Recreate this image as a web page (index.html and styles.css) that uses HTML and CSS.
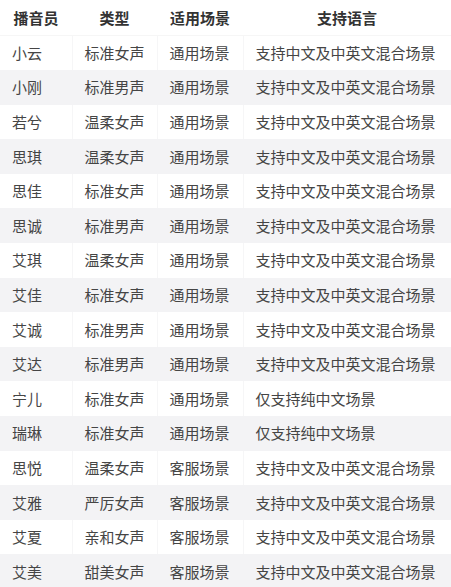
FILE: index.html
```html
<!DOCTYPE html>
<html lang="zh">
<head>
<meta charset="utf-8">
<link rel="stylesheet" href="styles.css">
</head>
<body>
<table class="voices">
<colgroup><col class="c1"><col class="c2"><col class="c3"><col class="c4"></colgroup>
<thead>
<tr><th>播音员</th><th>类型</th><th>适用场景</th><th>支持语言</th></tr>
</thead>
<tbody>
<tr><td>小云</td><td>标准女声</td><td>通用场景</td><td>支持中文及中英文混合场景</td></tr>
<tr><td>小刚</td><td>标准男声</td><td>通用场景</td><td>支持中文及中英文混合场景</td></tr>
<tr><td>若兮</td><td>温柔女声</td><td>通用场景</td><td>支持中文及中英文混合场景</td></tr>
<tr><td>思琪</td><td>温柔女声</td><td>通用场景</td><td>支持中文及中英文混合场景</td></tr>
<tr><td>思佳</td><td>标准女声</td><td>通用场景</td><td>支持中文及中英文混合场景</td></tr>
<tr><td>思诚</td><td>标准男声</td><td>通用场景</td><td>支持中文及中英文混合场景</td></tr>
<tr><td>艾琪</td><td>温柔女声</td><td>通用场景</td><td>支持中文及中英文混合场景</td></tr>
<tr><td>艾佳</td><td>标准女声</td><td>通用场景</td><td>支持中文及中英文混合场景</td></tr>
<tr><td>艾诚</td><td>标准男声</td><td>通用场景</td><td>支持中文及中英文混合场景</td></tr>
<tr><td>艾达</td><td>标准男声</td><td>通用场景</td><td>支持中文及中英文混合场景</td></tr>
<tr><td>宁儿</td><td>标准女声</td><td>通用场景</td><td>仅支持纯中文场景</td></tr>
<tr><td>瑞琳</td><td>标准女声</td><td>通用场景</td><td>仅支持纯中文场景</td></tr>
<tr><td>思悦</td><td>温柔女声</td><td>客服场景</td><td>支持中文及中英文混合场景</td></tr>
<tr><td>艾雅</td><td>严厉女声</td><td>客服场景</td><td>支持中文及中英文混合场景</td></tr>
<tr><td>艾夏</td><td>亲和女声</td><td>客服场景</td><td>支持中文及中英文混合场景</td></tr>
<tr><td>艾美</td><td>甜美女声</td><td>客服场景</td><td>支持中文及中英文混合场景</td></tr>
</tbody>
</table>
</body>
</html>
```
FILE: styles.css
```css
html, body {
  margin: 0;
  padding: 0;
  background: #ffffff;
}
body {
  font-family: "Noto Sans CJK SC", "Noto Sans", sans-serif;
  overflow: hidden;
}
.voices {
  width: 451px;
  border-collapse: collapse;
  table-layout: fixed;
}
.c1 { width: 72px; }
.c2 { width: 85px; }
.c3 { width: 86px; }
.c4 { width: 208px; }
.voices th {
  height: 35px;
  padding: 0;
  font-size: 15px;
  font-weight: 700;
  color: #333333;
  text-align: center;
  border-bottom: 1px solid #f6f6f6;
}
.voices td {
  height: 34.6px;
  padding: 0 0 0 12px;
  font-size: 15px;
  line-height: 20px;
  color: #454545;
  text-align: left;
  white-space: nowrap;
  border-left: 1px solid #f6f6f7;
  box-sizing: border-box;
}
.voices td:first-child {
  border-left: none;
}
.voices tbody tr:nth-child(even) td {
  background: #f3f3f5;
  border-left-color: #f3f3f5;
}
```
